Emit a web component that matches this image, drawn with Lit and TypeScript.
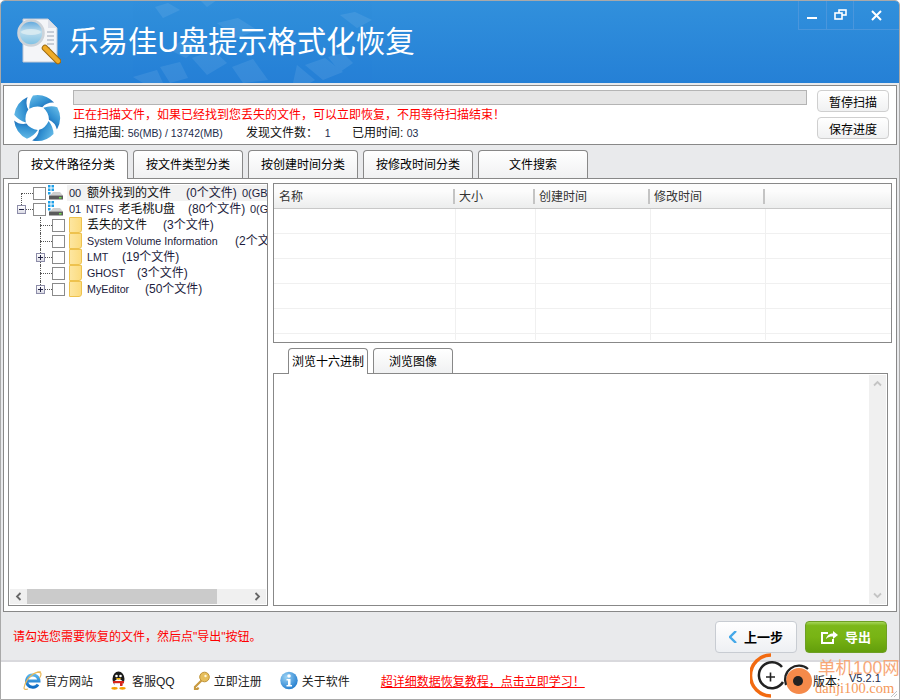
import { LitElement, html, css, unsafeCSS } from "lit";
import { customElement } from "lit/decorators.js";

const FONT = unsafeCSS(`"Liberation Sans", "Noto Sans CJK SC", sans-serif`);

const drive = html`<svg class="ico" width="16" height="16" viewBox="0 0 16 16">
  <rect x="0" y="0" width="2.5" height="2.5" fill="#1ea0e8"/><rect x="3.5" y="0" width="2.5" height="2.5" fill="#1ea0e8"/>
  <rect x="0" y="3.5" width="2.5" height="2.5" fill="#1ea0e8"/><rect x="3.5" y="3.5" width="2.5" height="2.5" fill="#1ea0e8"/>
  <rect x="0" y="7" width="2.5" height="2.5" fill="#1ea0e8"/>
  <path d="M5 7h7l3 3.5H2z" fill="#cfcfcf"/><rect x="1" y="10.5" width="14" height="4" fill="#5a5a5a"/><rect x="11" y="12" width="2.5" height="1.5" fill="#6fdc4a"/>
</svg>`;

const folder = html`<span class="folder"></span>`;

const swirl = "M-7.7 -9.2Q-8 -17 -4 -22.6A23 23 0 0 1 17.1 -15.4Q10 -16 5.3 -10.8Q-1 -13 -7.7 -9.2Z";
const logoRing = html`<svg width="48" height="48" viewBox="-24 -24 48 48">
  <defs><linearGradient id="rg" x1="0" y1="0" x2="1" y2="1"><stop offset="0" stop-color="#6cc0ea"/><stop offset=".55" stop-color="#2f8ed0"/><stop offset="1" stop-color="#164f9e"/></linearGradient></defs>
  <g fill="url(#rg)">
    <path d=${swirl}/>
    <path d=${swirl} transform="rotate(72)"/>
    <path d=${swirl} transform="rotate(144)"/>
    <path d=${swirl} transform="rotate(216)"/>
    <path d=${swirl} transform="rotate(288)"/>
  </g>
</svg>`;

const ROWS = [
  { sp: 12, exp: "", dots: 12, icon: drive, pre: "00", name: "额外找到的文件", nw: 99, count: "(0个文件)", cw: 56, tail: "0(GB)", sel: true, vl: [12, 8, 16] },
  { sp: 8, exp: "-", dots: 7, icon: drive, pre: "01", name: html`<span class="ntfs">NTFS</span>老毛桃U盘`, nw: 102, count: "(80个文件)", cw: 62, tail: "0(GB)", pl: -1 },
  { sp: 31, exp: "", dots: 12, icon: folder, name: "丢失的文件", nw: 76, count: "(3个文件)", vl: [31, 0, 16] },
  { sp: 31, exp: "", dots: 12, icon: folder, name: "System Volume Information", nw: 148, count: "(2个文件)", latin: true, vl: [31, 0, 16] },
  { sp: 27, exp: "+", dots: 7, icon: folder, name: "LMT", nw: 35, count: "(19个文件)", latin: true, vl: [31, 0, 16] },
  { sp: 31, exp: "", dots: 12, icon: folder, name: "GHOST", nw: 50, count: "(3个文件)", latin: true, vl: [31, 0, 16] },
  { sp: 27, exp: "+", dots: 7, icon: folder, name: "MyEditor", nw: 58, count: "(50个文件)", latin: true, vl: [31, 0, 8] },
] as any[];

@customElement("app-root")
export class AppRoot extends LitElement {
  static styles = css`
    :host { display: block; width: 900px; height: 700px; font-family: ${FONT}; font-size: 12px; color: #000; }
    * { box-sizing: border-box; }
    .win { width: 900px; height: 700px; display: flex; flex-direction: column; background: #e9eaec; border: 1px solid #a9a9a9; border-top-left-radius: 5px; border-top-right-radius: 5px; overflow: hidden; }
    .head { height: 82px; flex: none; position: relative; display: flex; align-items: center; padding-left: 14px; gap: 8px; background: linear-gradient(#3190dc, #2580d6); overflow: hidden; }
    .deco { position: absolute; left: -1px; top: -1px; pointer-events: none; }
    .title { color: #fff; font-size: 29.5px; position: relative; line-height: 1; }
    .wbtns { position: absolute; right: 0; top: 0; display: flex; height: 29px; border-left: 1px solid #4a96dc; border-bottom: 1px solid #4a96dc; }
    .wbtn { width: 28px; display: flex; align-items: center; justify-content: center; border-right: 1px solid #4a96dc; }
    .wbtn:nth-child(2) { width: 27px; }
    .wbtn:last-child { width: 45px; border-right: 0; }
    .info { margin: 2px 2px 0; height: 60px; flex: none; background: #fff; border: 1px solid #888; display: flex; padding: 4px 6px 0 9px; }
    .ring { width: 48px; margin-top: 4px; flex: none; }
    .mid { width: 734px; margin-left: 12px; display: flex; flex-direction: column; flex: none; }
    .prog { height: 15px; background: #e5e5e5; border: 1px solid #b4b4b4; }
    .warn { color: #f00; height: 20px; line-height: 20px; }
    .stat { display: flex; height: 16px; line-height: 16px; color: #111; white-space: pre; }
    .stat i { font-style: normal; font-size: 10.5px; color: #1c2c4c; }
    .btns { margin-left: 10px; display: flex; flex-direction: column; gap: 5px; }
    .btn { width: 72px; height: 22px; border: 1px solid #cfcfcf; border-radius: 4px; background: linear-gradient(#fff, #f0f1f2); display: flex; align-items: center; justify-content: center; font-size: 12px; }
    .tabs { display: flex; height: 28px; flex: none; margin-top: 5px; padding-left: 17px; gap: 5px; position: relative; z-index: 1; }
    .tab { width: 110px; height: 28px; padding-bottom: 2px; border: 1px solid #888; border-bottom: 0; border-radius: 4px 4px 0 0; background: linear-gradient(#fff, #f0f1f2); display: flex; align-items: center; justify-content: center; font-size: 12px; }
    .tab.on { background: #fff; height: 29px; padding-bottom: 3px; }
    .panel { margin: 0 2px; height: 434px; flex: none; background: #fff; border: 1px solid #888; display: flex; padding: 4px 4px 5px 4px; gap: 5px; }
    .tree { width: 260px; flex: none; border: 1px solid #888; display: flex; flex-direction: column; overflow: hidden; }
    .nodes { flex: 1; padding-top: 1px; overflow: hidden; }
    .node { height: 16px; display: flex; align-items: center; white-space: pre; position: relative; font-size: 12px; color: #111; }
    .vl { position: absolute; width: 0; border-left: 1px dotted #555; }
    .exp { width: 9px; height: 9px; flex: none; border: 1px solid #8c8ca8; background: linear-gradient(#fff, #dcdce6); position: relative; }
    .exp::before { content: ""; position: absolute; left: 1px; top: 3px; width: 5px; height: 1px; background: #224; }
    .exp.plus::after { content: ""; position: absolute; left: 3px; top: 1px; width: 1px; height: 5px; background: #224; }
    .dots { border-top: 1px dotted #555; flex: none; height: 0; }
    .cb { width: 13px; height: 13px; flex: none; border: 1px solid #8a8a8a; background: #fff; }
    .ico { flex: none; margin-left: 2px; }
    .folder { width: 13px; height: 16px; flex: none; margin-left: 4px; background: linear-gradient(90deg, #fde6a0, #fcdc80); border: 1px solid #eec24e; border-bottom-right-radius: 3px; }
    .lbl { flex: 1; min-width: 0; overflow: hidden; display: flex; line-height: 16px; align-items: center; }
    .lbl.big { margin-left: 3px; padding-left: 2px; }
    .lbl.sm { margin-left: 5px; }
    .lbl.sel { background: #f2f2f2; }
    .pre { width: 18px; flex: none; font-size: 11px; color: #1c1c3c; }
    .nm { flex: none; }
    .nm.latin { font-size: 10.7px; color: #1c1c3c; }
    .ntfs { font-size: 10.5px; color: #1c1c3c; margin-right: 5px; }
    .cnt { flex: none; color: #1c1c3c; }
    .tl { flex: none; font-size: 11px; color: #1c1c3c; }
    .hs { height: 15px; flex: none; background: #f0f0f0; display: flex; align-items: center; margin: 0 1px 1px 1px; justify-content: space-between; position: relative; }
    .hs .thumb { position: absolute; left: 17px; top: 0; width: 190px; height: 15px; background: #cbcbcb; }
    .arr { width: 17px; flex: none; display: flex; justify-content: center; }
    .right { flex: 1; display: flex; flex-direction: column; min-width: 0; }
    .list { height: 160px; flex: none; border: 1px solid #888; display: flex; flex-direction: column; overflow: hidden; }
    .lh { height: 25px; flex: none; border-bottom: 1px solid #c8c8c8; background: linear-gradient(#fcfcfc 30%, #eceded); display: grid; grid-template-columns: 182px 80px 115px 115px 1fr; }
    .lh div { padding-left: 3px; line-height: 27px; color: #333; position: relative; font-size: 12px; }
    .lh div:first-child { padding-left: 5px; }
    .lh div:not(:last-child)::after { content: ""; position: absolute; right: 1px; top: 5px; height: 15px; width: 2px; background: #c4c4c4; }
    .grid { flex: 1; display: grid; grid-template-columns: 182px 80px 115px 115px 1fr; grid-auto-rows: 25px; overflow: hidden; margin-bottom: 2px; }
    .grid div { border-right: 1px solid #f0f0f0; border-bottom: 1px solid #f0f0f0; }
    .grid div:nth-child(5n) { border-right: 0; }
    .htabs { display: flex; height: 25px; flex: none; margin-top: 5px; padding-left: 15px; gap: 5px; position: relative; z-index: 1; }
    .htab { width: 80px; height: 25px; padding-bottom: 2px; border: 1px solid #888; border-bottom: 0; border-radius: 4px 4px 0 0; background: linear-gradient(#fff, #f0f1f2); display: flex; align-items: center; justify-content: center; font-size: 12px; }
    .htab.on { background: #fff; height: 26px; padding-bottom: 3px; }
    .hex { flex: 1; margin-right: 4px; border: 1px solid #888; display: flex; justify-content: flex-end; min-height: 0; background: #fff; }
    .vs { width: 17px; background: #f0f0f0; margin: 1px 1px 1px 0; display: flex; flex-direction: column; justify-content: space-between; align-items: center; padding: 5px 0 5px; }
    .hint { height: 48px; flex: none; display: flex; align-items: center; justify-content: space-between; padding: 0 12px 0 12px; }
    .hint .msg { color: #f00; font-size: 12px; margin-top: -2px; }
    .act { display: flex; gap: 8px; margin-top: 1px; }
    .b2 { width: 82px; height: 32px; border-radius: 4px; display: flex; align-items: center; justify-content: center; gap: 7px; font-size: 13px; font-weight: bold; }
    .prev { background: linear-gradient(#fff, #eef0f3); border: 1px solid #c8ccd2; }
    .exp-btn { color: #fff; background: linear-gradient(#a5d65a 0, #7cb81a 12%, #78b414 50%, #639e0c 100%); border: 1px solid #6e9f24; }
    .foot { flex: 1; background: #fff; border-top: 2px solid #d9d9dd; display: flex; align-items: center; position: relative; padding-bottom: 1px; }
    .fi { display: flex; align-items: center; gap: 4px; height: 24px; white-space: nowrap; color: #222; }
    .fi.tight { gap: 3px; }
    .link { color: #f00; text-decoration: underline; white-space: nowrap; }
    .ver { position: absolute; left: 812px; top: 10px; display: flex; font-size: 12px; color: #111; white-space: pre; }
    .ver span { width: 36px; }
    .ver b { font-weight: normal; font-size: 11px; color: #1c2c4c; }
    .wm { position: absolute; left: 749px; top: -13px; width: 150px; height: 50px; }
    .wm1 { position: absolute; left: 817px; top: -4px; color: #f7a878; font-size: 17.5px; line-height: 20px; white-space: nowrap; }
    .wm2 { position: absolute; left: 814px; top: 19px; color: #f59a5c; font-size: 14.5px; line-height: 15px; white-space: nowrap; font-family: "Liberation Serif", serif; }
    .grip { position: absolute; right: 1px; bottom: 1px; }
  `;

  private node(r: any) {
    return html`<div class="node">
      ${r.vl ? html`<span class="vl" style="left:${r.vl[0]}px;top:${r.vl[1]}px;height:${r.vl[2]}px"></span>` : ""}
      <span style="width:${r.sp}px;flex:none"></span>
      ${r.exp ? html`<span class="exp ${r.exp === "+" ? "plus" : ""}"></span>` : ""}
      <span class="dots" style="width:${r.dots}px"></span>
      <span class="cb"></span>${r.icon}
      <span class="lbl ${r.pre ? "big" : "sm"} ${r.sel ? "sel" : ""}">
        ${r.pre ? html`<span class="pre" style="width:${18 + (r.pl || 0)}px">${r.pre}</span>` : ""}
        <span class="nm ${r.latin ? "latin" : ""}" style="width:${r.nw}px">${r.name}</span>
        <span class="cnt" style=${r.cw ? `width:${r.cw}px` : ""}>${r.count}</span>
        ${r.tail ? html`<span class="tl">${r.tail}</span>` : ""}
      </span>
    </div>`;
  }

  render() {
    const cells = Array.from({ length: 30 }, () => html`<div></div>`);
    return html`<div class="win">
      <div class="head">
        <svg class="deco" width="400" height="84" viewBox="0 0 400 84" fill="#fff" opacity=".08">
          <path d="M155 7l13-4 12 7-17 8z"/><path d="M200 0h17l-10 7z"/><path d="M340 15l15-3 17 8-15 8z"/>
          <path d="M217 23l21-5 19 12-20 8z"/><path d="M133 77l24-7 6 13h-20z"/><path d="M160 67l20-5 8 16-18 5z"/>
          <path d="M192 58l21-8 14 13-20 12z"/><path d="M232 67l21-8 15 21-25 3z"/><path d="M293 83l4-18 18 15-5 3z"/>
          <path d="M305 65l20-7 18 14-20 8z"/><path d="M328 57l15-4 10 10-13 9z"/><path d="M170 50l14-12 14 10-12 10z"/>
        </svg>
        <svg width="46" height="50" viewBox="0 0 46 50" style="position:relative;flex:none">
          <defs>
            <linearGradient id="gl" x1="0" y1="0" x2="0" y2="1"><stop offset="0" stop-color="#5aa4dc"/><stop offset=".45" stop-color="#bcdcec"/><stop offset="1" stop-color="#7cc0e4"/></linearGradient>
          </defs>
          <path d="M8 2h25l9 9v34H8z" fill="#f4f5f8" stroke="#c2c8d4"/><path d="M33 2v9h9" fill="#dde1ea"/>
          <g stroke="#9aa4b4"><path d="M32 15h7M32 19h7M32 23h7M32 27h7M32 31h3"/></g>
          <circle cx="16" cy="16" r="12.5" fill="url(#gl)" stroke="#cdd3d9" stroke-width="2.6"/>
          <ellipse cx="16" cy="15" rx="10" ry="3" fill="#dcecf2" opacity=".85"/>
          <path d="M30 31l13 13" stroke="#9c6a10" stroke-width="6.5" stroke-linecap="round"/>
          <path d="M30 31l13 13" stroke="#f0ac28" stroke-width="4.5" stroke-linecap="round"/>
        </svg>
        <div class="title">乐易佳U盘提示格式化恢复</div>
        <div class="wbtns">
          <div class="wbtn"><svg width="11" height="11" viewBox="0 0 11 11"><rect x="0" y="7" width="10" height="2" fill="#fff"/></svg></div>
          <div class="wbtn"><svg width="13" height="12" viewBox="0 0 13 12" fill="none" stroke="#fff" stroke-width="1.6"><rect x="5" y="1" width="7" height="5"/><rect x="1" y="4" width="7" height="6" fill="#2d8bda"/></svg></div>
          <div class="wbtn"><svg width="11" height="11" viewBox="0 0 11 11" stroke="#fff" stroke-width="2"><path d="M1 1l9 9M10 1l-9 9"/></svg></div>
        </div>
      </div>

      <div class="info">
        <div class="ring">${logoRing}</div>
        <div class="mid">
          <div class="prog"></div>
          <div class="warn">正在扫描文件，如果已经找到您丢失的文件，可以立即恢复，不用等待扫描结束！</div>
          <div class="stat"><span style="width:173px">扫描范围: <i>56(MB) / 13742(MB)</i></span><span style="width:106px">发现文件数：  <i>1</i></span><span>已用时间: <i>03</i></span></div>
        </div>
        <div class="btns"><div class="btn">暂停扫描</div><div class="btn">保存进度</div></div>
      </div>

      <div class="tabs">
        <div class="tab on">按文件路径分类</div><div class="tab">按文件类型分类</div><div class="tab">按创建时间分类</div><div class="tab">按修改时间分类</div><div class="tab">文件搜索</div>
      </div>

      <div class="panel">
        <div class="tree">
          <div class="nodes">${ROWS.map((r) => this.node(r))}</div>
          <div class="hs">
            <span class="thumb"></span>
            <span class="arr"><svg width="7" height="9" viewBox="0 0 7 9"><path d="M5.5 1L2 4.5 5.5 8" fill="none" stroke="#666" stroke-width="1.8"/></svg></span>
            <span class="arr"><svg width="7" height="9" viewBox="0 0 7 9"><path d="M1.5 1L5 4.5 1.5 8" fill="none" stroke="#666" stroke-width="1.8"/></svg></span>
          </div>
        </div>
        <div class="right">
          <div class="list">
            <div class="lh"><div>名称</div><div>大小</div><div>创建时间</div><div>修改时间</div><div></div></div>
            <div class="grid">${cells}</div>
          </div>
          <div class="htabs"><div class="htab on">浏览十六进制</div><div class="htab">浏览图像</div></div>
          <div class="hex"><div class="vs">
            <svg width="9" height="7" viewBox="0 0 9 7"><path d="M1 5.5L4.5 2 8 5.5" fill="none" stroke="#c4c4c4" stroke-width="1.8"/></svg>
            <svg width="9" height="7" viewBox="0 0 9 7"><path d="M1 1.5L4.5 5 8 1.5" fill="none" stroke="#c4c4c4" stroke-width="1.8"/></svg>
          </div></div>
        </div>
      </div>

      <div class="hint">
        <span class="msg">请勾选您需要恢复的文件，然后点"导出"按钮。</span>
        <div class="act">
          <div class="b2 prev"><svg width="8" height="12" viewBox="0 0 8 12"><path d="M7 0L1 6l6 6" fill="none" stroke="#45a8e8" stroke-width="2.4"/></svg>上一步</div>
          <div class="b2 exp-btn"><svg width="17" height="14" viewBox="0 0 17 14" fill="none" stroke="#fff" stroke-width="2"><path d="M7 3H1v10h11V9"/><path d="M5 9c1-4 4-5.5 7-5.5V1l5 4-5 4V6.5C9 6.500 7 7 5 9z" fill="#fff" stroke="none"/></svg>导出</div>
        </div>
      </div>

      <div class="foot">
        <div class="fi tight" style="margin-left:22px"><svg width="19" height="19" viewBox="0 0 19 19"><defs><linearGradient id="ie" x1="0" y1="0" x2="0" y2="1"><stop offset="0" stop-color="#58b4ec"/><stop offset="1" stop-color="#0f6cc4"/></linearGradient></defs><path d="M15 13.5A6.2 6.2 0 1 1 16 10H5" fill="none" stroke="url(#ie)" stroke-width="3"/><path d="M18 1C13 0 3 6 1 17c0 1 1 2 4 1" fill="none" stroke="#eab95a" stroke-width="1.2"/><path d="M14 1.5c2 0 4-.5 4 1.5 0 1-.5 3-1.500 4" fill="none" stroke="#eab95a" stroke-width="1.2"/></svg>官方网站</div>
        <div class="fi" style="margin-left:16px"><svg width="19" height="19" viewBox="0 0 19 19"><ellipse cx="9.500" cy="8" rx="6" ry="7.500" fill="#1a1a1a"/><ellipse cx="9.500" cy="12.500" rx="4.200" ry="4.500" fill="#fff"/><circle cx="7.500" cy="5" r="1.300" fill="#fff"/><circle cx="11.500" cy="5" r="1.300" fill="#fff"/><path d="M6.500 7h6l-3 2z" fill="#f4b400"/><rect x="4" y="10" width="11" height="2.200" fill="#d8261c"/><rect x="11" y="11" width="2.500" height="4" fill="#d8261c"/><ellipse cx="5.500" cy="17.300" rx="3.200" ry="1.400" fill="#f4a000"/><ellipse cx="13.500" cy="17.300" rx="3.200" ry="1.400" fill="#f4a000"/></svg>客服QQ</div>
        <div class="fi" style="margin-left:18px"><svg width="17" height="19" viewBox="0 0 17 19"><circle cx="11.500" cy="6" r="4.800" fill="#e6be5c" stroke="#c0943a"/><circle cx="12.500" cy="5" r="1.200" fill="#fff6d8"/><path d="M8.500 9.500L2 16v2h2.500l1-1.500" stroke="#c89a40" stroke-width="2.200" fill="none"/></svg>立即注册</div>
        <div class="fi" style="margin-left:18px"><svg width="18" height="19" viewBox="0 0 18 19"><defs><radialGradient id="inf" cx=".35" cy=".3" r=".8"><stop offset="0" stop-color="#9ad2f4"/><stop offset="1" stop-color="#1c78cc"/></radialGradient></defs><circle cx="9" cy="9.500" r="8.700" fill="url(#inf)"/><circle cx="9" cy="5" r="1.800" fill="#fff"/><path d="M6.500 8h4v6h1.500v1.500H6.500V14H8V9.500H6.500z" fill="#fff"/></svg>关于软件</div>
        <span class="link" style="margin-left:31px">超详细数据恢复教程，点击立即学习！</span>
        <svg class="wm" viewBox="0 0 150 50">
          <path d="M21 6A19 19 0 0 0 21 47" fill="none" stroke="#f26a10" stroke-width="3.500"/>
          <path d="M32 18A13 13 0 1 0 33 33" fill="none" stroke="#222" stroke-width="2.500"/>
          <path d="M16 28h9M20.500 23.500v9" stroke="#222" stroke-width="1.600"/>
          <circle cx="49" cy="32" r="13" fill="#f58a4a"/>
          <path d="M36 36A14 14 0 0 1 58 20" fill="none" stroke="#222" stroke-width="2.200"/>
          <circle cx="48" cy="32" r="5" fill="#222"/>
        </svg>
        <span class="wm1">单机100网</span>
        <span class="wm2">danji100.com</span>
        <span class="ver"><span>版本:</span><b>V5.2.1</b></span>
        <svg class="grip" width="9" height="9" viewBox="0 0 9 9" stroke="#c4c4c4"><path d="M8 2L2 8M8 5L5 8"/></svg>
      </div>
    </div>`;
  }
}
